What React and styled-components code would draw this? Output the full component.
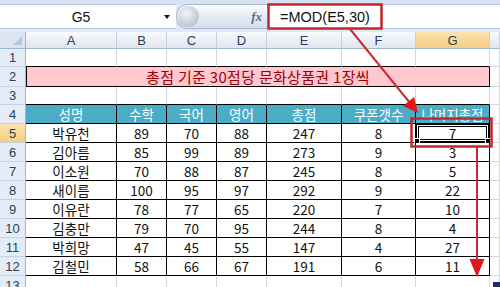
import React from 'react'
import styled, { createGlobalStyle, css } from 'styled-components'

const GlobalStyle = createGlobalStyle`
  html, body { margin: 0; padding: 0; background: #fff; }
  body { font-family: "Noto Sans CJK KR", "Noto Sans", sans-serif; }
`

const cols = ['A', 'B', 'C', 'D', 'E', 'F', 'G', 'H']
const heads = ['성명', '수학', '국어', '영어', '총점', '쿠폰갯수', '나머지총점']
const rows = [
  ['박유천', 89, 70, 88, 247, 8, 7],
  ['김아름', 85, 99, 89, 273, 9, 3],
  ['이소원', 70, 88, 87, 245, 8, 5],
  ['새이름', 100, 95, 97, 292, 9, 22],
  ['이유란', 78, 77, 65, 220, 7, 10],
  ['김충만', 79, 70, 95, 244, 8, 4],
  ['박희망', 47, 45, 55, 147, 4, 27],
  ['김철민', 58, 66, 67, 191, 6, 11],
]

const Page = styled.div`
  position: relative;
  width: 500px;
  height: 287px;
  overflow: hidden;
  background: #fff;
`

const TopStrip = styled.div`
  height: 4px;
  background: #d6e2f2;
`

const FormulaBar = styled.div`
  display: flex;
  height: 25px;
  background: #dfe8f4;
  border-bottom: 3px solid #dfe8f4;
`

const NameBox = styled.div`
  position: relative;
  width: 176px;
  display: flex;
  align-items: center;
  justify-content: center;
  background: #fff;
  border-top: 1px solid #b9c9dd;
  border-bottom: 1px solid #b9c9dd;
  font-family: "Liberation Sans", Arial, sans-serif;
  font-size: 14px;
  color: #111;
  padding-right: 14px;
  box-sizing: border-box;
`

const DropArrow = styled.span`
  position: absolute;
  right: 6px;
  top: 10px;
  width: 0;
  height: 0;
  border-left: 3.5px solid transparent;
  border-right: 3.5px solid transparent;
  border-top: 4px solid #111;
`

const FxButton = styled.div`
  width: 92px;
  display: flex;
  align-items: center;
  justify-content: flex-end;
  padding-right: 6px;
  box-sizing: border-box;
  border-radius: 12px 0 0 12px;
  border: 1px solid #a9b8cb;
  border-right: none;
  background: linear-gradient(#fbfcfe, #e3eaf3 55%, #d5dfeb);
  position: relative;
`

const Knob = styled.span`
  position: absolute;
  left: 1px;
  top: 1px;
  width: 21px;
  height: 21px;
  border-radius: 50%;
  background: radial-gradient(circle at 40% 35%, #f4f6f8, #c3ccd6 60%, #a9b3be);
`

const FxLabel = styled.span`
  font-family: "Liberation Serif", "Times New Roman", serif;
  font-style: italic;
  font-weight: bold;
  font-size: 13px;
  color: #5b6b80;
`

const FormulaInput = styled.div`
  flex: 1;
  display: flex;
  align-items: center;
  padding-left: 12px;
  background: #fff;
  border-top: 1px solid #b9c9dd;
  border-bottom: 1px solid #b9c9dd;
  font-family: "Liberation Sans", Arial, sans-serif;
  font-size: 14.5px;
  color: #111;
`

const Sheet = styled.div`
  display: grid;
  grid-template-columns: 26px 91px 50px 50px 50px 75px 74px 74px 1fr;
  grid-template-rows: 17px 18px 20px 18px 19px repeat(8, 19px) 19px;
`

const ColHead = styled.div`
  display: flex;
  align-items: center;
  justify-content: center;
  box-sizing: border-box;
  border-right: 1px solid #c5d1de;
  border-bottom: 1px solid #9eb6ce;
  font-family: "Liberation Sans", Arial, sans-serif;
  font-size: 13px;
  color: #2c3e55;
  background: ${p => p.$active
    ? 'linear-gradient(#fbe3b0, #f6cd84)'
    : 'linear-gradient(#f8fafd, #dfe6ef)'};
`

const Corner = styled.div`
  position: relative;
  box-sizing: border-box;
  border-right: 1px solid #9eb6ce;
  border-bottom: 1px solid #9eb6ce;
  background: #dbe5f1;
  &::after {
    content: '';
    position: absolute;
    right: 3px;
    bottom: 3px;
    border-left: 9px solid transparent;
    border-bottom: 9px solid #b7c7da;
  }
`

const RowHead = styled.div`
  display: flex;
  align-items: center;
  justify-content: center;
  box-sizing: border-box;
  border-right: 1px solid #9eb6ce;
  border-bottom: 1px solid #c5d1de;
  font-family: "Liberation Sans", Arial, sans-serif;
  font-size: 13px;
  color: #2c3e55;
  background: ${p => p.$active ? 'linear-gradient(#fbe3b0, #f6cd84)' : '#e4ecf7'};
`

const Cell = styled.div`
  position: relative;
  display: flex;
  align-items: center;
  justify-content: center;
  box-sizing: border-box;
  font-size: 13.5px;
  color: #111;
  border-right: 1px solid #d0d7e5;
  border-bottom: 1px solid #d0d7e5;
  ${p => p.$boxed && css`
    border-right-color: #000;
    border-bottom-color: #000;
  `}
  ${p => p.$topEdge && css`
    border-bottom-color: #000;
  `}
  ${p => p.$span && css`
    grid-column: span ${p.$span};
  `}
  ${p => p.$variant === 'title' && css`
    background: #ffc7ce;
    color: #9c0006;
    font-size: 15px;
    letter-spacing: 0.3px;
    border-left: 1px solid #000;
  `}
  ${p => p.$variant === 'head' && css`
    background: #4bacc6;
    color: #fff;
  `}
  ${p => p.$selected && css`
    box-shadow: inset 0 0 0 1px #000, inset 0 0 0 2px #fff, inset 0 0 0 3px #000;
  `}
`

const Handle = styled.span`
  position: absolute;
  bottom: -2px;
  ${p => p.$side}: -2px;
  width: 4px;
  height: 4px;
  background: #000;
  border: 1px solid #fff;
`

const Overlay = styled.svg`
  position: absolute;
  left: 0;
  top: 0;
  pointer-events: none;
`

const emptyRow = (n, topEdge) => (
  <React.Fragment key={`r${n}`}>
    <RowHead>{n}</RowHead>
    {cols.map((c, i) => (
      <Cell key={c} $topEdge={topEdge && i < 7} />
    ))}
  </React.Fragment>
)

export default function App() {
  return (
    <Page>
      <GlobalStyle />
      <TopStrip />
      <FormulaBar>
        <NameBox>
          G5
          <DropArrow />
        </NameBox>
        <FxButton>
          <Knob />
          <FxLabel>fx</FxLabel>
        </FxButton>
        <FormulaInput>=MOD(E5,30)</FormulaInput>
      </FormulaBar>

      <Sheet>
        <Corner />
        {cols.map(c => (
          <ColHead key={c} $active={c === 'G'}>{c === 'H' ? '' : c}</ColHead>
        ))}

        {emptyRow(1, true)}

        <RowHead>2</RowHead>
        <Cell $boxed $span={7} $variant="title">총점 기준 30점당 문화상품권 1장씩</Cell>
        <Cell />

        {emptyRow(3, true)}

        <RowHead>4</RowHead>
        {heads.map(h => (
          <Cell key={h} $boxed $variant="head">{h}</Cell>
        ))}
        <Cell />

        {rows.map((r, ri) => (
          <React.Fragment key={r[0]}>
            <RowHead $active={ri === 0}>{ri + 5}</RowHead>
            {r.map((v, ci) => (
              <Cell key={ci} $boxed $selected={ri === 0 && ci === 6}>
                {v}
                {ri === 0 && ci === 6 && (
                  <>
                    <Handle $side="left" />
                    <Handle $side="right" />
                  </>
                )}
              </Cell>
            ))}
            <Cell />
          </React.Fragment>
        ))}

        {emptyRow(13, false)}
      </Sheet>

      <Overlay width="500" height="287" viewBox="0 0 500 287">
        <rect x="268.5" y="4.5" width="113" height="24" fill="none" stroke="#c0272d" strokeWidth="2.5" />
        <rect x="411.5" y="118.5" width="80" height="28" fill="none" stroke="#c0272d" strokeWidth="2.5" />
        <line x1="350" y1="29" x2="410" y2="103" stroke="#cf2a2e" strokeWidth="2" />
        <polygon points="418,113 403,106 414,97" fill="#e0161d" />
        <line x1="477" y1="147" x2="477" y2="262" stroke="#cf2a2e" strokeWidth="2" />
        <polygon points="469.5,259 484.5,259 477,277" fill="#e0161d" />
        <rect x="493" y="282" width="7" height="5" fill="#1c2a6e" />
      </Overlay>
    </Page>
  )
}
